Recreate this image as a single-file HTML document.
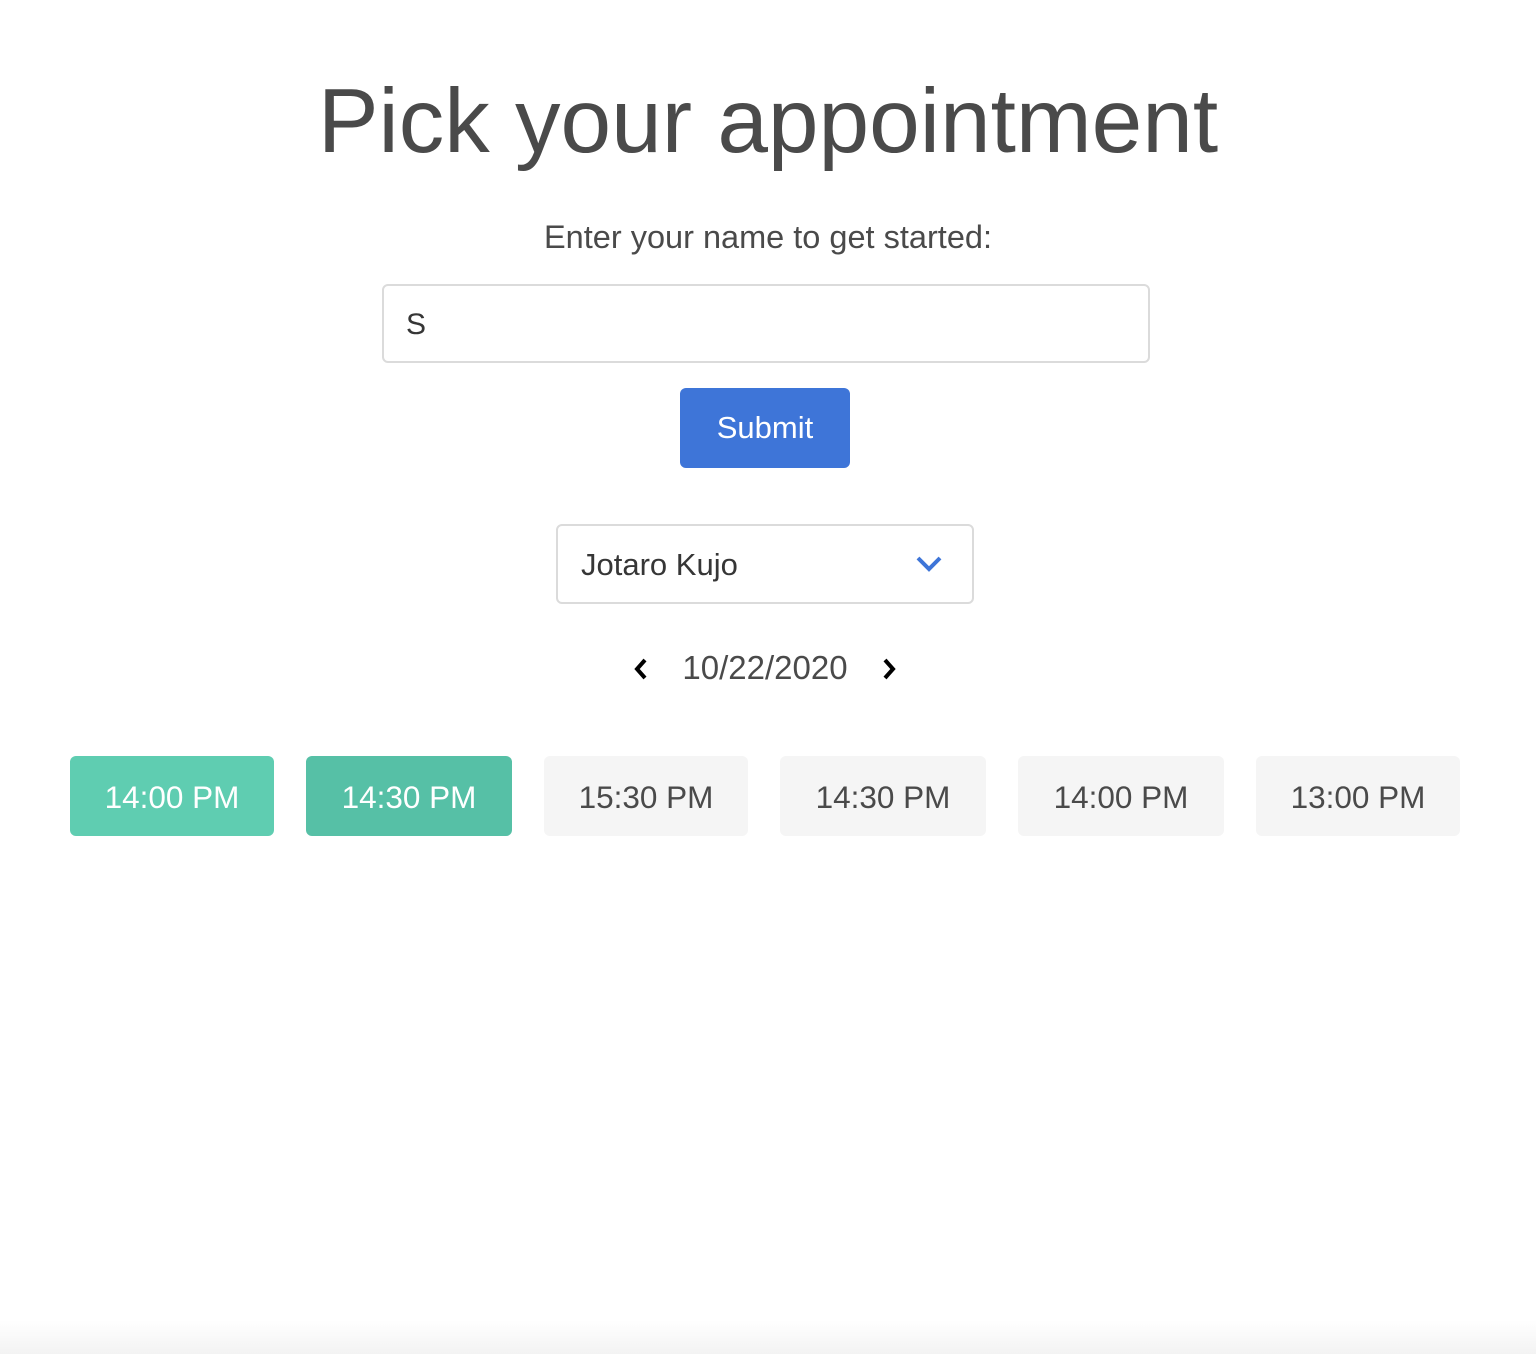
<!DOCTYPE html>
<html><head><style>
body{margin:0;width:1536px;height:1354px;background:#fff;font-family:"Liberation Sans",sans-serif;color:#4a4a4a;position:relative;overflow:hidden}
.a{position:absolute}
h1{position:absolute;top:62px;left:0;width:1536px;text-align:center;margin:0;font-size:91px;font-weight:400;color:#4a4a4a;line-height:120px}
.lbl{top:219px;left:0;width:1536px;text-align:center;font-size:32.5px;line-height:36px}
.inp{left:382px;top:284px;width:768px;height:79px;border:2px solid #dbdbdb;border-radius:6px;box-sizing:border-box;font-size:30px;line-height:78px;padding-left:22px;color:#363636}
.btn{left:680px;top:388px;width:170px;height:80px;background:#3e75d8;border-radius:6px;color:#fff;font-size:31px;line-height:80px;text-align:center}
.sel{left:556px;top:524px;width:418px;height:80px;border:2px solid #dbdbdb;border-radius:6px;box-sizing:border-box;font-size:31px;line-height:78px;padding-left:23px;color:#363636}
.date{top:649px;left:0;width:1530px;text-align:center;font-size:33px;line-height:38px}
.t{top:756px;width:205px;height:80px;border-radius:6px;font-size:31.5px;line-height:82px;text-align:center;background:#f5f5f5;color:#4a4a4a}
.fade{left:0;top:1320px;width:1536px;height:34px;background:linear-gradient(#fff,#f3f3f3)}
</style></head><body>
<h1>Pick your appointment</h1>
<div class="a lbl">Enter your name to get started:</div>
<div class="a inp">S</div>
<div class="a btn">Submit</div>
<div class="a sel">Jotaro Kujo
<svg class="a" style="left:356px;top:28px" width="30" height="20" viewBox="0 0 30 20"><path d="M4 4 L15 15 L26 4" fill="none" stroke="#3e75d8" stroke-width="4"/></svg></div>
<div class="a date">10/22/2020</div>
<svg class="a" style="left:632px;top:657px" width="18" height="24" viewBox="0 0 18 24"><path d="M13 3 L5 12 L13 21" fill="none" stroke="#000" stroke-width="4"/></svg>
<svg class="a" style="left:880px;top:657px" width="18" height="24" viewBox="0 0 18 24"><path d="M5 3 L13 12 L5 21" fill="none" stroke="#000" stroke-width="4"/></svg>
<div class="a t" style="left:70px;width:204px;background:#5fcdb1;color:#fff">14:00 PM</div>
<div class="a t" style="left:306px;width:206px;background:#56c0a6;color:#fff">14:30 PM</div>
<div class="a t" style="left:544px;width:204px">15:30 PM</div>
<div class="a t" style="left:780px;width:206px">14:30 PM</div>
<div class="a t" style="left:1018px;width:206px">14:00 PM</div>
<div class="a t" style="left:1256px;width:204px">13:00 PM</div>
<div class="a fade"></div>
</body></html>
